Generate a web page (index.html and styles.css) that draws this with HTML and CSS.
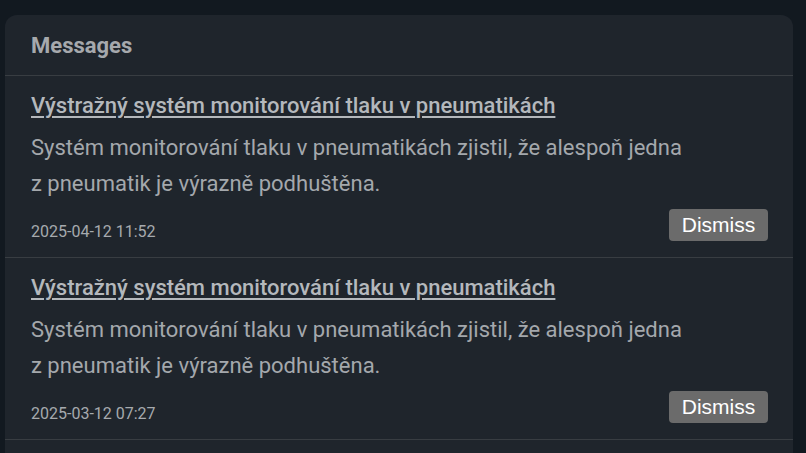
FILE: index.html
```html
<!DOCTYPE html>
<html lang="cs">
<head>
<meta charset="utf-8">
<title>Messages</title>
<link rel="stylesheet" href="styles.css">
</head>
<body>
<section class="card">
  <header class="card-header">Messages</header>
  <article class="message">
    <a class="message-title" href="#">Výstražný systém monitorování tlaku v pneumatikách</a>
    <p class="message-body">Systém monitorování tlaku v pneumatikách zjistil, že alespoň jedna<br>z pneumatik je výrazně podhuštěna.</p>
    <div class="message-footer">
      <span class="message-date">2025-04-12 11:52</span>
      <button class="dismiss">Dismiss</button>
    </div>
  </article>
  <article class="message">
    <a class="message-title" href="#">Výstražný systém monitorování tlaku v pneumatikách</a>
    <p class="message-body">Systém monitorování tlaku v pneumatikách zjistil, že alespoň jedna<br>z pneumatik je výrazně podhuštěna.</p>
    <div class="message-footer">
      <span class="message-date">2025-03-12 07:27</span>
      <button class="dismiss">Dismiss</button>
    </div>
  </article>
</section>
</body>
</html>
```
FILE: styles.css
```css
html, body {
  margin: 0;
  padding: 0;
  background: #121920;
  font-family: Roboto, "Noto Sans", sans-serif;
  overflow: hidden;
}
body {
  padding: 15px 13px 0 5px;
  height: 453px;
  box-sizing: border-box;
}
.card {
  background: #1f252c;
  border-radius: 12px 12px 0 0;
  min-height: 500px;
}
.card-header {
  height: 60px;
  display: flex;
  align-items: center;
  padding: 0 26px;
  font-size: 22px;
  font-weight: 700;
  color: #a6a9ad;
  border-bottom: 1px solid #383d42;
}
.message {
  padding: 15px 25px 13px 26px;
  border-bottom: 1px solid #383d42;
}
.message-title {
  display: block;
  font-size: 22px;
  font-weight: 500;
  line-height: 30px;
  color: #b4b8bc;
  text-decoration: underline;
  text-underline-offset: 3px;
}
.message-body {
  margin: 9px 0 0;
  font-size: 22px;
  line-height: 36px;
  color: #a4a8ac;
}
.message-footer {
  display: flex;
  justify-content: space-between;
  align-items: flex-start;
  margin-top: 7px;
}
.message-date {
  margin-top: 11px;
  font-size: 16px;
  line-height: 24px;
  color: #a6aaae;
}
.dismiss {
  width: 99px;
  height: 32px;
  border: none;
  border-radius: 4px;
  background: #6b6b6b;
  color: #ffffff;
  font-family: "Liberation Sans", Arial, sans-serif;
  font-size: 21px;
  padding: 0;
}
```
